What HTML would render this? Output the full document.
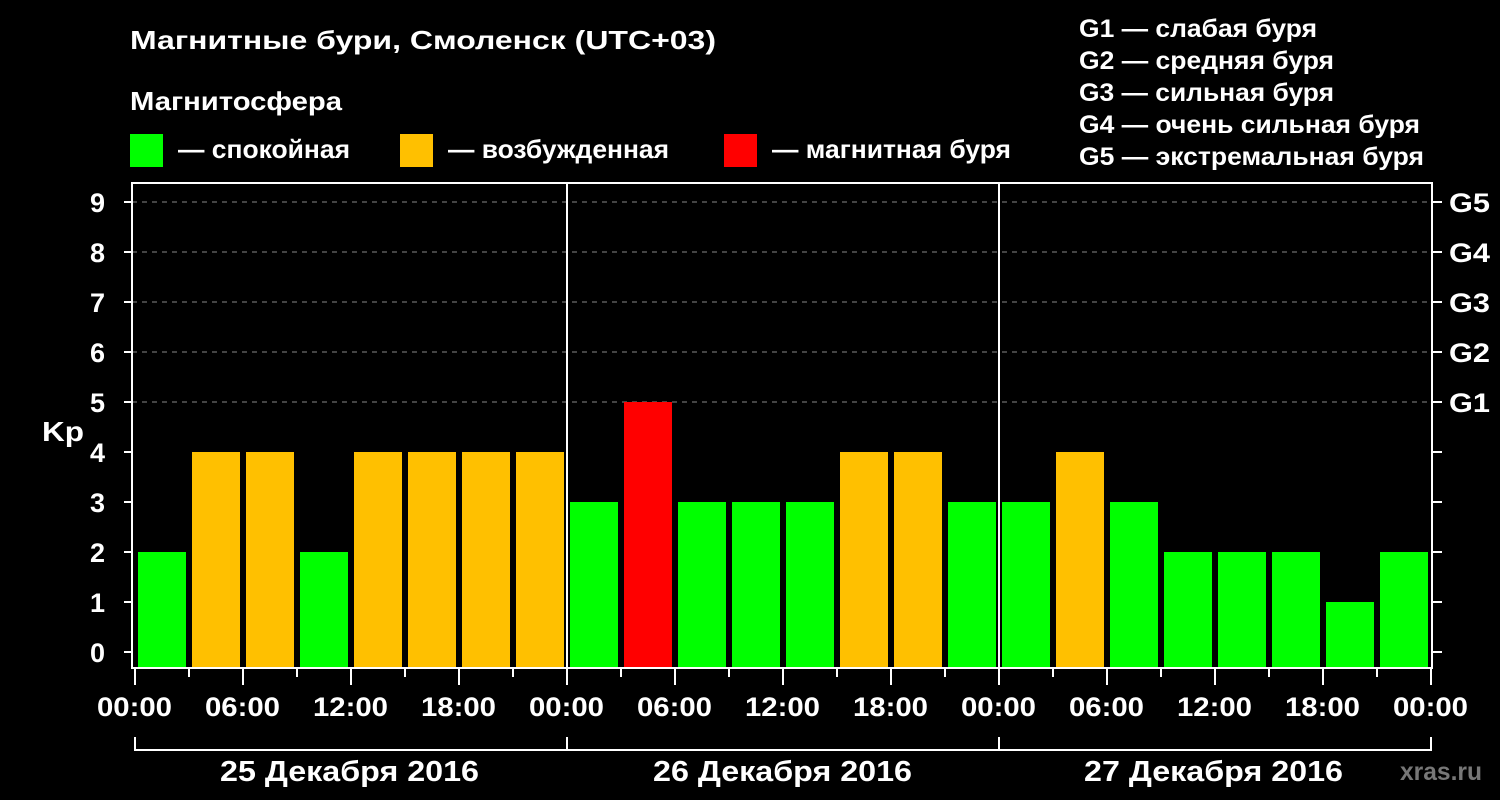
<!DOCTYPE html>
<html><head><meta charset="utf-8"><style>
html,body{margin:0;padding:0;background:#000;}
svg{display:block;font-family:"Liberation Sans",Arial,sans-serif;font-weight:bold;}
</style></head><body>
<svg width="1500" height="800" viewBox="0 0 1500 800">
<rect width="1500" height="800" fill="#000"/>
<g fill="#fff" lengthAdjust="spacingAndGlyphs">
<text x="130" y="49" font-size="26" textLength="586" lengthAdjust="spacingAndGlyphs">Магнитные бури, Смоленск (UTC+03)</text>
<text x="130" y="110" font-size="26" textLength="212" lengthAdjust="spacingAndGlyphs">Магнитосфера</text>
<text x="178" y="158" font-size="26" textLength="172" lengthAdjust="spacingAndGlyphs">— спокойная</text>
<text x="448" y="158" font-size="26" textLength="221" lengthAdjust="spacingAndGlyphs">— возбужденная</text>
<text x="772" y="158" font-size="26" textLength="239" lengthAdjust="spacingAndGlyphs">— магнитная буря</text>
<text x="1079" y="37" font-size="25" textLength="238" lengthAdjust="spacingAndGlyphs">G1 — слабая буря</text>
<text x="1079" y="69" font-size="25" textLength="255" lengthAdjust="spacingAndGlyphs">G2 — средняя буря</text>
<text x="1079" y="101" font-size="25" textLength="255" lengthAdjust="spacingAndGlyphs">G3 — сильная буря</text>
<text x="1079" y="133" font-size="25" textLength="341" lengthAdjust="spacingAndGlyphs">G4 — очень сильная буря</text>
<text x="1079" y="165" font-size="25" textLength="345" lengthAdjust="spacingAndGlyphs">G5 — экстремальная буря</text>
</g>
<rect x="130" y="134" width="33" height="33" fill="#00ff00"/>
<rect x="400" y="134" width="33" height="33" fill="#ffc000"/>
<rect x="724" y="134" width="33" height="33" fill="#ff0000"/>
<g stroke="#888" stroke-dasharray="5,5" stroke-width="1">
<line x1="132" x2="1432" y1="202" y2="202"/><line x1="132" x2="1432" y1="252" y2="252"/>
<line x1="132" x2="1432" y1="302" y2="302"/><line x1="132" x2="1432" y1="352" y2="352"/>
<line x1="132" x2="1432" y1="402" y2="402"/>
</g>
<g>
<rect x="138" y="552" width="48" height="115" fill="#00ff00"/>
<rect x="192" y="452" width="48" height="215" fill="#ffc000"/>
<rect x="246" y="452" width="48" height="215" fill="#ffc000"/>
<rect x="300" y="552" width="48" height="115" fill="#00ff00"/>
<rect x="354" y="452" width="48" height="215" fill="#ffc000"/>
<rect x="408" y="452" width="48" height="215" fill="#ffc000"/>
<rect x="462" y="452" width="48" height="215" fill="#ffc000"/>
<rect x="516" y="452" width="48" height="215" fill="#ffc000"/>
<rect x="570" y="502" width="48" height="165" fill="#00ff00"/>
<rect x="624" y="402" width="48" height="265" fill="#ff0000"/>
<rect x="678" y="502" width="48" height="165" fill="#00ff00"/>
<rect x="732" y="502" width="48" height="165" fill="#00ff00"/>
<rect x="786" y="502" width="48" height="165" fill="#00ff00"/>
<rect x="840" y="452" width="48" height="215" fill="#ffc000"/>
<rect x="894" y="452" width="48" height="215" fill="#ffc000"/>
<rect x="948" y="502" width="48" height="165" fill="#00ff00"/>
<rect x="1002" y="502" width="48" height="165" fill="#00ff00"/>
<rect x="1056" y="452" width="48" height="215" fill="#ffc000"/>
<rect x="1110" y="502" width="48" height="165" fill="#00ff00"/>
<rect x="1164" y="552" width="48" height="115" fill="#00ff00"/>
<rect x="1218" y="552" width="48" height="115" fill="#00ff00"/>
<rect x="1272" y="552" width="48" height="115" fill="#00ff00"/>
<rect x="1326" y="602" width="48" height="65" fill="#00ff00"/>
<rect x="1380" y="552" width="48" height="115" fill="#00ff00"/>
</g>
<g stroke="#fff" stroke-width="2" fill="none">
<rect x="132" y="183" width="1300" height="485"/>
<line x1="567" y1="183" x2="567" y2="668"/><line x1="999" y1="183" x2="999" y2="668"/>
<polyline points="135,737 135,750 1431,750 1431,737"/>
<line x1="567" y1="737" x2="567" y2="750"/><line x1="999" y1="737" x2="999" y2="750"/>
<path d="M124 652H132M124 602H132M124 552H132M124 502H132M124 452H132M124 402H132M124 352H132M124 302H132M124 252H132M124 202H132
M1432 652H1442M1432 602H1442M1432 552H1442M1432 502H1442M1432 452H1442M1432 402H1442M1432 352H1442M1432 302H1442M1432 252H1442M1432 202H1442
M135 668V685M189 668V677M243 668V685M297 668V677M351 668V685M405 668V677M459 668V685M513 668V677M567 668V685M621 668V677M675 668V685M729 668V677M783 668V685M837 668V677M891 668V685M945 668V677M999 668V685M1053 668V677M1107 668V685M1161 668V677M1215 668V685M1269 668V677M1323 668V685M1377 668V677M1431 668V685"/>
</g>
<g fill="#fff" font-size="27" text-anchor="end">
<text x="105" y="662">0</text><text x="105" y="612">1</text><text x="105" y="562">2</text>
<text x="105" y="512">3</text><text x="105" y="462">4</text><text x="105" y="412">5</text>
<text x="105" y="362">6</text><text x="105" y="312">7</text><text x="105" y="262">8</text>
<text x="105" y="212">9</text>
</g>
<text x="42" y="441" fill="#fff" font-size="28" textLength="42" lengthAdjust="spacingAndGlyphs">Kp</text>
<g fill="#fff" font-size="27">
<text x="1449" y="212" textLength="41" lengthAdjust="spacingAndGlyphs">G5</text><text x="1449" y="262" textLength="41" lengthAdjust="spacingAndGlyphs">G4</text><text x="1449" y="312" textLength="41" lengthAdjust="spacingAndGlyphs">G3</text>
<text x="1449" y="362" textLength="41" lengthAdjust="spacingAndGlyphs">G2</text><text x="1449" y="412" textLength="41" lengthAdjust="spacingAndGlyphs">G1</text>
</g>
<g fill="#fff" font-size="27">
<text x="97" y="716" textLength="75" lengthAdjust="spacingAndGlyphs">00:00</text><text x="205" y="716" textLength="75" lengthAdjust="spacingAndGlyphs">06:00</text><text x="313" y="716" textLength="75" lengthAdjust="spacingAndGlyphs">12:00</text><text x="421" y="716" textLength="75" lengthAdjust="spacingAndGlyphs">18:00</text>
<text x="529" y="716" textLength="75" lengthAdjust="spacingAndGlyphs">00:00</text><text x="637" y="716" textLength="75" lengthAdjust="spacingAndGlyphs">06:00</text><text x="745" y="716" textLength="75" lengthAdjust="spacingAndGlyphs">12:00</text><text x="853" y="716" textLength="75" lengthAdjust="spacingAndGlyphs">18:00</text>
<text x="961" y="716" textLength="75" lengthAdjust="spacingAndGlyphs">00:00</text><text x="1069" y="716" textLength="75" lengthAdjust="spacingAndGlyphs">06:00</text><text x="1177" y="716" textLength="75" lengthAdjust="spacingAndGlyphs">12:00</text><text x="1285" y="716" textLength="75" lengthAdjust="spacingAndGlyphs">18:00</text>
<text x="1393" y="716" textLength="75" lengthAdjust="spacingAndGlyphs">00:00</text>
</g>
<g fill="#fff" font-size="29">
<text x="220" y="781" textLength="259" lengthAdjust="spacingAndGlyphs">25 Декабря 2016</text>
<text x="653" y="781" textLength="259" lengthAdjust="spacingAndGlyphs">26 Декабря 2016</text>
<text x="1084" y="781" textLength="259" lengthAdjust="spacingAndGlyphs">27 Декабря 2016</text>
</g>
<text x="1400" y="780" fill="#777" font-size="25" textLength="82" lengthAdjust="spacingAndGlyphs">xras.ru</text>
</svg>
</body></html>
